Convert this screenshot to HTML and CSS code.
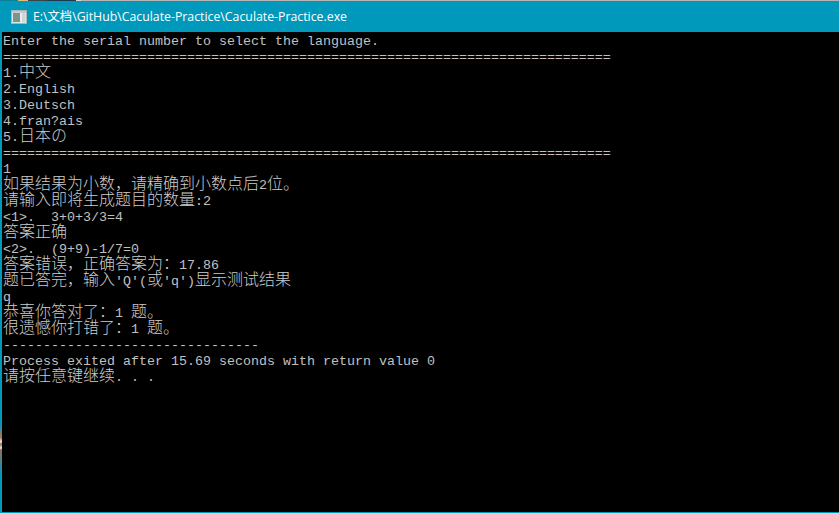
FILE: index.html
```html
<!DOCTYPE html>
<html lang="zh">
<head>
<meta charset="utf-8">
<title>Caculate-Practice</title>
<link rel="stylesheet" href="styles.css">
</head>
<body>
<div class="window">
  <div class="backdrop">
    <span class="seg seg-teal"></span><span class="seg seg-tan"></span><span class="seg seg-dark"></span><span class="seg seg-navy"></span><span class="seg seg-gray"></span>
  </div>
  <header class="titlebar">
    <svg class="app-icon" width="16" height="14" viewBox="0 0 16 14" aria-hidden="true">
      <rect x="0.5" y="0.5" width="15" height="13" fill="#dfe6e8" stroke="#aab4b8"/>
      <rect x="1" y="1" width="14" height="2" fill="#c3ccd0"/>
      <rect x="2" y="3" width="7" height="9" fill="#7d9488"/>
      <rect x="9.5" y="3" width="1" height="9" fill="#f4f6f6"/>
      <rect x="11" y="3" width="3" height="9" fill="#ccd6d4"/>
    </svg>
    <span class="title-text">E:\文档\GitHub\Caculate-Practice\Caculate-Practice.exe</span>
  </header>
  <pre class="console">Enter the serial number to select the language.
============================================================================
1.<span class="cjk">中文</span>
2.English
3.Deutsch
4.fran?ais
5.<span class="cjk">日本の</span>
============================================================================
1
<span class="cjk">如果结果为小数，请精确到小数点后</span>2<span class="cjk">位。</span>
<span class="cjk">请输入即将生成题目的数量</span>:2
&lt;1&gt;.  3+0+3/3=4
<span class="cjk">答案正确</span>
&lt;2&gt;.  (9+9)-1/7=0
<span class="cjk">答案错误，正确答案为：</span>17.86
<span class="cjk">题已答完，输入</span>'Q'(<span class="cjk">或</span>'q')<span class="cjk">显示测试结果</span>
q
<span class="cjk">恭喜你答对了：</span>1 <span class="cjk">题。</span>
<span class="cjk">很遗憾你打错了：</span>1 <span class="cjk">题。</span>
--------------------------------
Process exited after 15.69 seconds with return value 0
<span class="cjk">请按任意键继续</span>. . .</pre>
</div>
</body>
</html>
```

FILE: styles.css
```css
html, body {
  margin: 0;
  padding: 0;
  height: 100%;
  background: #000;
  overflow: hidden;
}

.window {
  position: relative;
  box-sizing: border-box;
  width: 839px;
  height: 513px;
  display: flex;
  flex-direction: column;
  background: #000;
  border-left: 2px solid #0099bc;
  border-bottom: 1px solid #0099bc;
}

/* wallpaper showing through the translucent window edge */
.window::before {
  content: "";
  position: absolute;
  left: -2px;
  top: 425px;
  width: 2px;
  height: 50px;
  background: linear-gradient(#0099bc, #b5764a 25%, #e8e8e8 34%, #9a6a4e 38%, #e8e8e8 46%, #8f7060 50%, #0099bc);
}

.backdrop {
  display: flex;
  height: 1px;
  margin-left: -2px;
  background: #b4b4b4;
  flex: none;
}

.seg { display: block; height: 100%; }
.seg-teal { width: 18px; background: #0f7f98; }
.seg-tan { width: 10px; background: #d9c27e; }
.seg-dark { width: 19px; background: #3d4347; }
.seg-navy { width: 29px; background: #1d3a50; }
.seg-gray { width: 5px; background: #d8d8d8; }

.titlebar {
  flex: none;
  height: 31px;
  margin-left: -2px;
  display: flex;
  align-items: center;
  gap: 6px;
  padding: 0 0 0 11px;
  box-sizing: border-box;
  background: #0099bc;
}

.app-icon { flex: none; }

.title-text {
  color: #fff;
  font: 12.3px/16px "Open Sans", "Noto Sans CJK SC", sans-serif;
  white-space: nowrap;
}

.console {
  margin: 0;
  padding: 2px 0 0 1px;
  flex: 1;
  color: #c0c0c0;
  background: #000;
  font: 13.333px/16px "Liberation Mono", "Noto Sans CJK SC", monospace;
  white-space: pre;
  overflow: hidden;
}

.cjk {
  display: inline-block;
  height: 16px;
  margin-top: -4px;
  color: #cccccc;
  font-family: "Noto Sans CJK SC", sans-serif;
  font-size: 16px;
  font-weight: 300;
  line-height: 16px;
}
```
